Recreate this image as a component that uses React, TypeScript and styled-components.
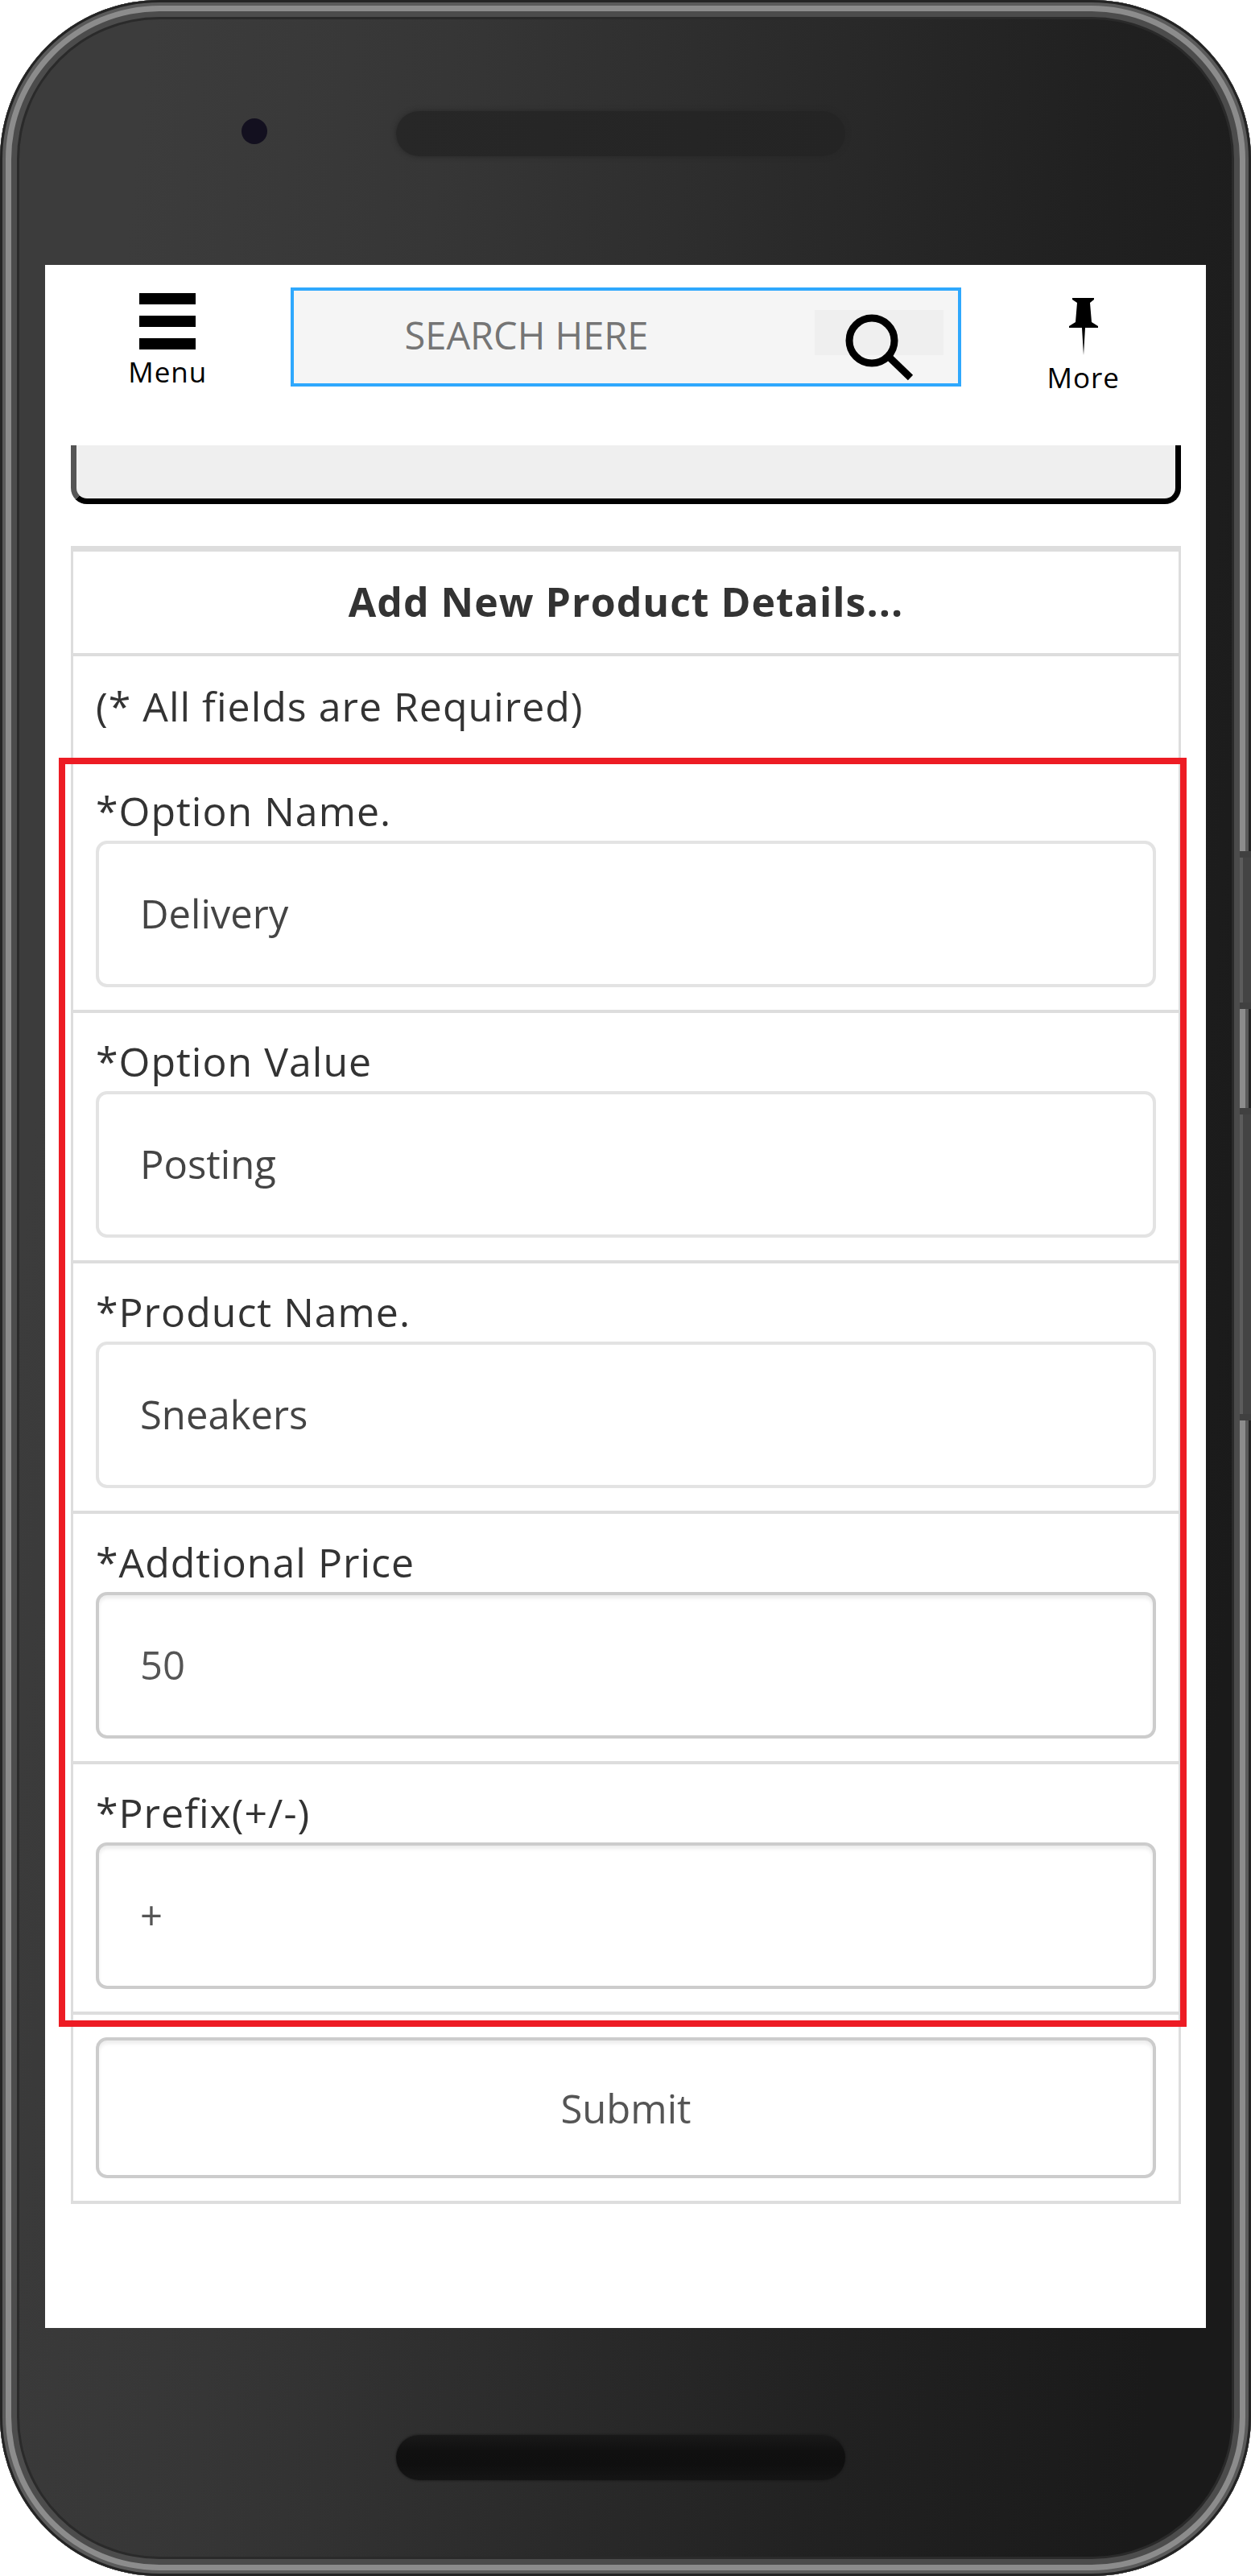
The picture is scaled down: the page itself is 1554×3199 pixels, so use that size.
import React, { useState } from "react";
import styled, { createGlobalStyle, css } from "styled-components";

const GlobalStyle = createGlobalStyle`
  *, *::before, *::after { box-sizing: border-box; }
  body {
    margin: 0;
    background: #fff;
    color: #333;
    font-family: "Open Sans", "Noto Sans", sans-serif;
  }
  button, input { font-family: inherit; margin: 0; }
`;

const Phone = styled.div`
  position: relative;
  padding: 0 56px;
  border-radius: 198px;
  overflow: hidden;
  background: linear-gradient(96deg, #3c3c3c 10%, #363636 30%, #2a2a2a 54%, #212121 72%, #1a1a1a 92%);
  box-shadow:
    inset 0 0 0 3px #242424,
    inset 0 0 0 7px #5a5a5a,
    inset 0 0 0 14px #8c8c8c,
    inset 0 0 0 21px #4c4c4c,
    inset 0 0 0 24px #2a2a2a;
`;

const Bezel = styled.div<{ $height: number; $offset: number }>`
  position: relative;
  display: flex;
  justify-content: center;
  height: ${(p) => p.$height}px;
  padding: ${(p) => p.$offset}px 12px 0 0;
`;

const Slot = styled.div<{ $tone: "soft" | "deep" }>`
  width: 558px;
  height: 56px;
  border-radius: 28px;
  ${(p) =>
    p.$tone === "soft"
      ? css`
          background: linear-gradient(90deg, #272727, #242424);
          box-shadow: 0 0 6px #272727;
        `
      : css`
          background: linear-gradient(180deg, #191919, #101010 35%, #0f0f0f 65%, #151515);
          box-shadow: 0 0 3px #151515;
        `}
`;

const Camera = styled.div`
  position: absolute;
  left: 244px;
  top: 147px;
  width: 32px;
  height: 32px;
  border-radius: 50%;
  background: #13101f;
`;

const SideKey = styled.div<{ $top: number; $height: number }>`
  position: absolute;
  right: 0;
  top: ${(p) => p.$top}px;
  width: 14px;
  height: ${(p) => p.$height}px;
  background: #444;
  border: solid #404040;
  border-width: 8px 0;
  box-shadow: inset 4px 0 0 #5c5c5c;
`;

const Screen = styled.main`
  background: #fff;
  padding-bottom: 154px;
`;

const TopBar = styled.header`
  display: grid;
  grid-template-columns: 1fr minmax(0, 833px) 1fr;
  align-items: start;
  height: 224px;
  padding-top: 28px;
`;

const NavButton = styled.button<{ $drop: number }>`
  display: flex;
  flex-direction: column;
  align-items: center;
  gap: 4px;
  padding: ${(p) => p.$drop}px 0 0;
  border: 0;
  background: none;
  color: #000;
  font-size: 35px;
  line-height: 48px;
  letter-spacing: 1px;
  cursor: pointer;
`;

const SearchForm = styled.form`
  display: flex;
  align-items: flex-start;
  height: 123px;
  padding: 24px 18px 0 138px;
  border: 4px solid #2fa8fd;
  background: #f5f5f5;
`;

const SearchInput = styled.input`
  flex: 1;
  min-width: 0;
  height: 63px;
  padding: 0;
  border: 0;
  outline: 0;
  background: transparent;
  color: #444;
  font-size: 47px;
  line-height: 63px;
  &::placeholder { color: #757575; opacity: 1; }
`;

const SearchButton = styled.button`
  width: 160px;
  height: 56px;
  padding: 3px 0 0 37px;
  border: 0;
  background: #efefef;
  cursor: pointer;
  svg { display: block; overflow: visible; }
`;

const Body = styled.div`
  padding: 0 31px 0 32px;
`;

const ScrolledPanel = styled.div`
  height: 73px;
  border: 7px solid #000;
  border-left-color: #555;
  border-top: 0;
  border-radius: 0 0 20px 20px;
  background: #efefef;
`;

const Card = styled.form`
  margin-top: 52px;
  border: 3px solid #ddd;
  border-top-width: 7px;
  border-bottom-width: 4px;
  font-size: 50px;
  line-height: 68px;
`;

const CardTitle = styled.h1`
  margin: 0;
  padding: 28px 28px 30px;
  border-bottom: 4px solid #ddd;
  font-size: 50px;
  font-weight: 700;
  text-align: center;
  letter-spacing: 1px;
`;

const Note = styled.p`
  margin: 0;
  padding: 28px 28px 32px;
  letter-spacing: 1px;
`;

const Fields = styled.div`
  position: relative;
  border-bottom: 4px solid #ddd;
  &::after {
    content: "";
    position: absolute;
    inset: -2px -10px -19px -18px;
    border: 8px solid #ed1c24;
    pointer-events: none;
  }
`;

const Field = styled.div`
  display: flex;
  flex-direction: column;
  gap: 3px;
  padding: 26px 28px 28px;
  border-top: 4px solid #ddd;
`;

const Label = styled.label`
  letter-spacing: 1px;
`;

const box = css`
  width: 100%;
  border: 4px solid #ccc;
  border-radius: 14px;
  background: #fff;
  box-shadow: inset 0 4px 4px rgba(0, 0, 0, 0.075);
  color: #555;
  font-size: 49px;
`;

const TextInput = styled.input<{ $muted: boolean }>`
  ${box}
  height: 182px;
  padding: 0 51px 2px;
  outline: 0;
  ${(p) =>
    p.$muted &&
    css`
      border-color: #e3e3e3;
      box-shadow: none;
      color: #444;
    `}
`;

const Actions = styled.div`
  padding: 28px;
`;

const Submit = styled.button`
  ${box}
  display: block;
  height: 175px;
  cursor: pointer;
`;

const fields = [
  { id: "option-name", label: "*Option Name.", value: "Delivery", muted: true },
  { id: "option-value", label: "*Option Value", value: "Posting", muted: true },
  { id: "product-name", label: "*Product Name.", value: "Sneakers", muted: true },
  { id: "price", label: "*Addtional Price", value: "50", muted: false },
  { id: "prefix", label: "*Prefix(+/-)", value: "+", muted: false },
];

const MenuIcon = () => (
  <svg width="70" height="70" viewBox="0 0 70 70" aria-hidden="true">
    <path d="M0 0h70v14H0zM0 28h70v14H0zM0 56h70v14H0z" />
  </svg>
);

const PinIcon = () => (
  <svg width="36" height="71" viewBox="0 0 36 71" aria-hidden="true">
    <path d="M4 0H31V2L26 6L28 30L36 35V37H20L18 71L16 37H0V35L8 30L10 6L4 2Z" />
  </svg>
);

const SearchIcon = () => (
  <svg width="84" height="84" viewBox="0 0 84 84" fill="none" stroke="#000" strokeWidth="9" aria-hidden="true">
    <circle cx="34" cy="35" r="28" />
    <path d="M54 54L82 81" />
  </svg>
);

export default function App() {
  const [values, setValues] = useState<Record<string, string>>(
    Object.fromEntries(fields.map((f) => [f.id, f.value]))
  );
  const [query, setQuery] = useState("");
  const stop = (e: React.FormEvent) => e.preventDefault();

  return (
    <>
      <GlobalStyle />
      <Phone>
        <Bezel $height={329} $offset={138}>
          <Camera />
          <Slot $tone="soft" />
        </Bezel>
        <Screen>
          <TopBar>
            <NavButton type="button" $drop={7}>
              <MenuIcon />
              Menu
            </NavButton>
            <SearchForm onSubmit={stop} role="search">
              <SearchInput
                type="text"
                aria-label="Search"
                placeholder="SEARCH HERE"
                value={query}
                onChange={(e) => setQuery(e.target.value)}
              />
              <SearchButton type="submit" aria-label="Search">
                <SearchIcon />
              </SearchButton>
            </SearchForm>
            <NavButton type="button" $drop={13}>
              <PinIcon />
              More
            </NavButton>
          </TopBar>
          <Body>
            <ScrolledPanel />
            <Card onSubmit={stop}>
              <CardTitle>Add New Product Details...</CardTitle>
              <Note>(* All fields are Required)</Note>
              <Fields>
                {fields.map((f) => (
                  <Field key={f.id}>
                    <Label htmlFor={f.id}>{f.label}</Label>
                    <TextInput
                      id={f.id}
                      type="text"
                      $muted={f.muted}
                      value={values[f.id]}
                      onChange={(e) => setValues({ ...values, [f.id]: e.target.value })}
                    />
                  </Field>
                ))}
              </Fields>
              <Actions>
                <Submit type="submit">Submit</Submit>
              </Actions>
            </Card>
          </Body>
        </Screen>
        <Bezel $height={308} $offset={133}>
          <Slot $tone="deep" />
        </Bezel>
        <SideKey $top={1057} $height={196} />
        <SideKey $top={1376} $height={388} />
      </Phone>
    </>
  );
}
